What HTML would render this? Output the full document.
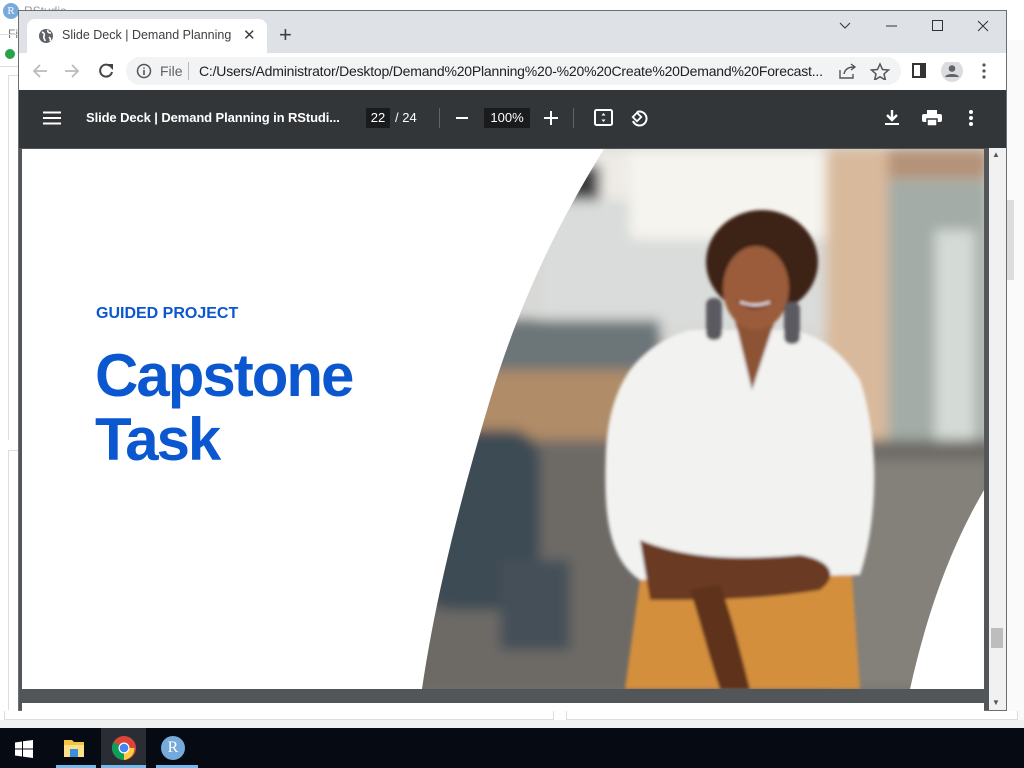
<!DOCTYPE html>
<html><head><meta charset="utf-8"><style>
*{margin:0;padding:0;box-sizing:border-box}
body{width:1024px;height:768px;overflow:hidden;background:#f0f0f0;position:relative;font-family:"Liberation Sans",Arial,sans-serif}
.abs{position:absolute}
</style></head><body>
<!-- RStudio background -->
<div class="abs" style="left:0;top:0;width:1024px;height:728px;background:#fff"></div>
<div class="abs" style="left:3px;top:3px;width:16px;height:16px;border-radius:50%;background:#75aadb;color:#fff;font:11px 'Liberation Serif',serif;text-align:center;line-height:16px">R</div>
<div class="abs" style="left:24px;top:4px;font-size:12px;color:#999">RStudio</div>
<div class="abs" style="left:8px;top:27px;font-size:12px;color:#777">Fi</div>
<div class="abs" style="left:0;top:34px;width:18px;height:1px;background:#ddd"></div>
<div class="abs" style="left:5px;top:49px;width:10px;height:10px;border-radius:50%;background:#2aa14b"></div>
<div class="abs" style="left:0;top:66px;width:18px;height:1px;background:#ddd"></div>
<div class="abs" style="left:8px;top:75px;width:10px;height:365px;border-left:1px solid #ddd;border-top:1px solid #ddd"></div>
<div class="abs" style="left:8px;top:450px;width:10px;height:260px;border-left:1px solid #ddd;border-top:1px solid #ddd"></div>
<div class="abs" style="left:1006px;top:40px;width:18px;height:690px;background:#fafafa"></div>
<div class="abs" style="left:1006px;top:200px;width:8px;height:80px;background:#ddd"></div>
<div class="abs" style="left:4px;top:711px;width:550px;height:9px;border:1px solid #ddd;border-top:none;background:#fff"></div>
<div class="abs" style="left:566px;top:711px;width:452px;height:9px;border:1px solid #ddd;border-top:none;background:#fff"></div>
<div class="abs" style="left:0;top:720px;width:1024px;height:8px;background:#f0f0f0"></div>

<!-- Chrome window -->
<div class="abs" style="left:18px;top:10px;width:989px;height:701px;background:#dee1e6;border:1px solid #6b6e72"></div>
<div class="abs" style="left:27px;top:19px;width:240px;height:35px;background:#fff;border-radius:8px 8px 0 0"></div>
<svg class="abs" style="left:38px;top:28px" width="16" height="16" viewBox="0 0 16 16"><circle cx="8" cy="8" r="7" fill="#5f6368"/><path d="M4 4c2 1 3 2 2 4s1 3 1 5M10 2c-1 2 1 3 3 3M11 9c1 1 2 2 1 4" stroke="#fff" stroke-width="1.6" fill="none"/></svg>
<div class="abs" style="left:62px;top:28px;width:172px;overflow:hidden;font-size:12.5px;color:#3c4043;white-space:nowrap">Slide Deck | Demand Planning in</div>
<div class="abs" style="left:243px;top:26px;font-size:15px;color:#3c4043">✕</div>
<div class="abs" style="left:279px;top:22px;font-size:22px;color:#3c4043">+</div>
<svg class="abs" style="left:836px;top:18px" width="160" height="16"><path d="M4 5l5 5 5-5" stroke="#333" fill="none"/><path d="M50 8h11" stroke="#333"/><rect x="96.5" y="2.5" width="10" height="10" stroke="#333" fill="none"/><path d="M142 3l10 10M152 3l-10 10" stroke="#333"/></svg>
<!-- toolbar -->
<div class="abs" style="left:19px;top:53px;width:987px;height:37px;background:#fff"></div>
<svg class="abs" style="left:30px;top:61px" width="90" height="20"><path d="M17 10H4M10 4l-6 6 6 6" stroke="#bbb" stroke-width="1.8" fill="none"/><path d="M35 10h13M42 4l6 6-6 6" stroke="#bbb" stroke-width="1.8" fill="none"/><path d="M80 5a6 6 0 1 0 2 6" stroke="#444" stroke-width="2" fill="none"/><path d="M77 3h6v6z" fill="#444"/></svg>
<div class="abs" style="left:126px;top:57px;width:775px;height:28px;background:#f1f3f4;border-radius:14px"></div>
<svg class="abs" style="left:136px;top:63px" width="16" height="16"><circle cx="8" cy="8" r="6.5" stroke="#555" stroke-width="1.5" fill="none"/><path d="M8 7v5M8 4.5v1.2" stroke="#555" stroke-width="1.6"/></svg>
<div class="abs" style="left:160px;top:63px;font-size:14px;color:#5f6368">File</div>
<div class="abs" style="left:188px;top:62px;width:1px;height:18px;background:#bbb"></div>
<div class="abs" style="left:199px;top:63px;font-size:14px;color:#202124;white-space:nowrap;letter-spacing:-0.2px">C:/Users/Administrator/Desktop/Demand%20Planning%20-%20%20Create%20Demand%20Forecast...</div>
<svg class="abs" style="left:838px;top:62px" width="60" height="18"><path d="M2 8v8h13v-4M6 12c1-5 5-7 10-7M13 2l4 3-4 3" stroke="#555" stroke-width="1.4" fill="none"/><path d="M42 2l2.5 5.5 6 .5-4.5 4 1.4 6-5.4-3.2-5.4 3.2 1.4-6-4.5-4 6-.5z" stroke="#555" stroke-width="1.5" fill="none"/></svg>
<svg class="abs" style="left:912px;top:62px" width="80" height="20"><rect x="1" y="2" width="12" height="13" stroke="#333" stroke-width="2" fill="none"/><rect x="8" y="2" width="5" height="13" fill="#333"/><circle cx="40" cy="9" r="11" fill="#dadce0"/><circle cx="40" cy="6.5" r="3.3" fill="#5f6368"/><path d="M33 15c1-4 13-4 14 0z" fill="#5f6368"/><circle cx="72" cy="3" r="1.6" fill="#555"/><circle cx="72" cy="9" r="1.6" fill="#555"/><circle cx="72" cy="15" r="1.6" fill="#555"/></svg>
<!-- PDF toolbar -->
<div class="abs" style="left:19px;top:90px;width:987px;height:58px;background:#323639"></div>
<svg class="abs" style="left:43px;top:111px" width="18" height="14"><path d="M0 1.5h18M0 7h18M0 12.5h18" stroke="#fff" stroke-width="2"/></svg>
<div class="abs" style="left:86px;top:110px;font-size:13px;font-weight:bold;color:#fff;white-space:nowrap;letter-spacing:-0.1px">Slide Deck | Demand Planning in RStudi...</div>
<div class="abs" style="left:366px;top:108px;width:24px;height:20px;background:#191b1c;color:#fff;font-size:13px;text-align:center;line-height:20px">22</div>
<div class="abs" style="left:395px;top:110px;font-size:13px;color:#fff">/ 24</div>
<div class="abs" style="left:439px;top:108px;width:1px;height:20px;background:#5f6368"></div>
<svg class="abs" style="left:455px;top:111px" width="14" height="14"><path d="M1 7h12" stroke="#fff" stroke-width="2"/></svg>
<div class="abs" style="left:484px;top:108px;width:46px;height:20px;background:#191b1c;color:#fff;font-size:13px;text-align:center;line-height:20px">100%</div>
<svg class="abs" style="left:544px;top:111px" width="14" height="14"><path d="M0 7h14M7 0v14" stroke="#fff" stroke-width="2"/></svg>
<div class="abs" style="left:573px;top:108px;width:1px;height:20px;background:#5f6368"></div>
<svg class="abs" style="left:594px;top:109px" width="20" height="18"><rect x="1" y="1" width="17" height="15" rx="1.5" stroke="#fff" stroke-width="2" fill="none"/><path d="M9.5 4l-2 2.5h4zM9.5 13l-2-2.5h4z" fill="#fff"/></svg>
<svg class="abs" style="left:630px;top:108px" width="20" height="20"><path d="M7 4a7 7 0 1 1-4 9" stroke="#fff" stroke-width="2" fill="none"/><rect x="4" y="6" width="6" height="6" transform="rotate(45 7 9)" stroke="#fff" stroke-width="1.8" fill="none"/></svg>
<svg class="abs" style="left:884px;top:109px" width="16" height="17"><path d="M8 1v9M3 6l5 5 5-5" stroke="#fff" stroke-width="2.4" fill="none"/><path d="M1 15h14" stroke="#fff" stroke-width="2"/></svg>
<svg class="abs" style="left:922px;top:110px" width="20" height="16"><rect x="5" y="0" width="10" height="4" fill="#fff"/><rect x="0" y="4" width="20" height="8" rx="2" fill="#fff"/><rect x="5" y="9" width="10" height="7" fill="#fff" stroke="#323639" stroke-width="1.5"/></svg>
<svg class="abs" style="left:968px;top:110px" width="6" height="16"><circle cx="3" cy="2" r="2" fill="#fff"/><circle cx="3" cy="8" r="2" fill="#fff"/><circle cx="3" cy="14" r="2" fill="#fff"/></svg>
<!-- viewer area -->
<div class="abs" style="left:19px;top:148px;width:970px;height:562px;background:#525659"></div>
<div class="abs" style="left:22px;top:703px;width:962px;height:8px;background:#fff"></div>
<div class="abs" style="left:989px;top:148px;width:17px;height:562px;background:#f1f1f1"></div>
<div class="abs" style="left:992px;top:150px;font-size:8px;color:#555">▲</div>
<div class="abs" style="left:992px;top:698px;font-size:8px;color:#555">▼</div>
<div class="abs" style="left:991px;top:628px;width:12px;height:20px;background:#bdbdbd"></div>
<!-- slide -->
<svg class="abs" style="left:22px;top:149px" width="962" height="540" viewBox="22 149 962 540">
<defs>
<clipPath id="c"><path d="M604 149 C560 220 520 300 490 400 C460 500 435 600 422 689 L910 689 C930 600 955 540 984 490 L984 149Z"/></clipPath>
<filter id="b"><feGaussianBlur stdDeviation="6"/></filter>
<filter id="b2"><feGaussianBlur stdDeviation="1.5"/></filter>
</defs>
<rect x="22" y="149" width="962" height="540" fill="#fff"/>
<g clip-path="url(#c)">
<rect x="400" y="149" width="600" height="540" fill="#d8d8d4"/>
<g filter="url(#b)">
<rect x="400" y="149" width="430" height="70" fill="#eeebe6"/>
<rect x="560" y="165" width="40" height="40" fill="#3d3d3d"/>
<rect x="540" y="200" width="290" height="130" fill="#d9dcda"/>
<rect x="630" y="149" width="200" height="90" fill="#f6f4ef"/>
<rect x="826" y="149" width="62" height="320" fill="#d9b99b"/>
<rect x="888" y="149" width="100" height="30" fill="#b49378"/>
<rect x="888" y="180" width="100" height="290" fill="#a3aca6"/>
<rect x="935" y="230" width="40" height="240" fill="#d4dad5"/>
<rect x="400" y="320" width="260" height="50" fill="#6c7478"/>
<rect x="400" y="370" width="240" height="80" fill="#b08c68"/>
<rect x="400" y="440" width="600" height="260" fill="#6d6b66"/>
<rect x="830" y="460" width="160" height="230" fill="#84807a"/>
<rect x="420" y="430" width="120" height="180" rx="30" fill="#3c4b55"/>
<rect x="500" y="560" width="70" height="90" fill="#445058"/>
</g>
<g filter="url(#b2)">
<path d="M690 330 C640 345 610 380 606 450 C603 520 610 560 640 580 L860 575 C878 520 880 440 860 380 C840 350 820 335 790 330 Z" fill="#f2f2f0"/>
<path d="M640 580 L625 689 L860 689 L852 575 Z" fill="#d48f3c"/>
<path d="M640 540 C690 560 740 560 800 555 C830 560 840 575 820 590 C760 600 700 600 650 600 Z" fill="#6b3a24"/>
<path d="M690 590 C700 620 710 660 720 689 L750 689 C740 650 730 610 720 585Z" fill="#5e321f"/>
<path d="M735 320 L752 390 L775 320 Z" fill="#8c5234"/>
<ellipse cx="762" cy="262" rx="56" ry="52" fill="#3d2418"/>
<ellipse cx="756" cy="288" rx="33" ry="42" fill="#9a5b3a"/>
<path d="M722 270 C725 240 750 232 790 245 C780 238 760 225 735 235 Z" fill="#3d2418"/>
<path d="M736 300 Q755 318 774 300 Q755 308 736 300Z" fill="#6b1420"/>
<path d="M740 302 Q755 308 770 302" stroke="#fff" stroke-width="2" fill="none"/>
<rect x="706" y="298" width="16" height="42" rx="7" fill="#5a5a60"/>
<rect x="784" y="302" width="16" height="42" rx="7" fill="#5a5a60"/>
</g>
</g>
<text x="96" y="318" style="font-family:'Liberation Sans',sans-serif;font-weight:700;font-size:16px" fill="#0b57d0">GUIDED PROJECT</text>
<text x="95" y="396" style="font-family:'Liberation Sans',sans-serif;font-weight:700;font-size:60px;letter-spacing:-2px" fill="#0b57d0">Capstone</text>
<text x="95" y="460" style="font-family:'Liberation Sans',sans-serif;font-weight:700;font-size:60px;letter-spacing:-2px" fill="#0b57d0">Task</text>
</svg>
<!-- taskbar -->
<div class="abs" style="left:0;top:728px;width:1024px;height:40px;background:#060a12"></div>
<svg class="abs" style="left:15px;top:740px" width="18" height="18"><path d="M0 2.5l7-1v7H0zM8 1.3l10-1.3v8.5H8zM0 9.5h7v7l-7-1zM8 9.5h10V18l-10-1.4z" fill="#fff"/></svg>
<svg class="abs" style="left:63px;top:737px" width="22" height="22"><path d="M1 3h8l2 2h10v15H1z" fill="#f4c440"/><rect x="1" y="8" width="20" height="12" fill="#fde08a"/><rect x="7" y="12" width="8" height="8" fill="#3a8fd8"/></svg>
<div class="abs" style="left:56px;top:765px;width:40px;height:3px;background:#76b9ed"></div>
<div class="abs" style="left:101px;top:728px;width:45px;height:40px;background:#2a2d33"></div>
<svg class="abs" style="left:112px;top:736px" width="24" height="24"><circle cx="12" cy="12" r="12" fill="#db4437"/><path d="M12 12L1.6 6A12 12 0 0 0 12 24z" fill="#0f9d58"/><path d="M12 12h10.4A12 12 0 0 1 12 24z" fill="#ffcd40"/><circle cx="12" cy="12" r="5.5" fill="#fff"/><circle cx="12" cy="12" r="4.3" fill="#4285f4"/></svg>
<div class="abs" style="left:101px;top:765px;width:45px;height:3px;background:#76b9ed"></div>
<div class="abs" style="left:161px;top:736px;width:24px;height:24px;border-radius:50%;background:#75aadb;color:#fff;font:16px 'Liberation Serif',serif;text-align:center;line-height:24px">R</div>
<div class="abs" style="left:156px;top:765px;width:42px;height:3px;background:#76b9ed"></div>
</body></html>
